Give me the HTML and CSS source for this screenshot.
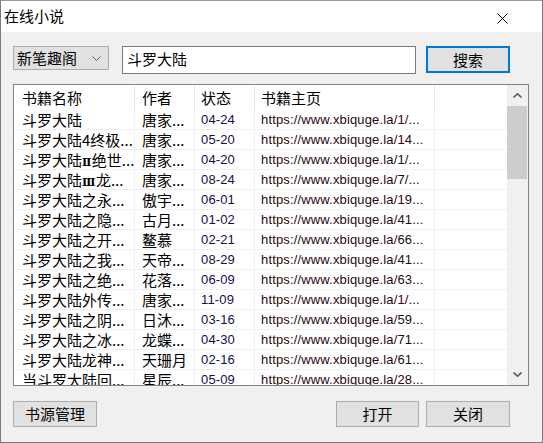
FILE: index.html
```html
<!DOCTYPE html>
<html lang="zh">
<head>
<meta charset="utf-8">
<title>在线小说</title>
<link rel="stylesheet" href="styles.css">
</head>
<body>
<div class="window">
  <div class="titlebar">
    <span class="title">在线小说</span>
    <svg class="close" width="11" height="11" viewBox="0 0 11 11"><path d="M0.5 0.5 L10.5 10.5 M10.5 0.5 L0.5 10.5" stroke="#000" stroke-width="1" fill="none"/></svg>
  </div>
  <div class="content">
    <div class="toolbar">
      <div class="combo"><span>新笔趣阁</span><svg class="chev" width="9" height="5" viewBox="0 0 9 5"><path d="M0.5 0.5 L4.5 4.5 L8.5 0.5" stroke="#606060" fill="none"/></svg></div>
      <div class="input">斗罗大陆</div>
      <div class="btn primary">搜索</div>
    </div>
    <div class="list">
      <div class="cols">
        <div class="row head">
          <div class="c c1">书籍名称</div><div class="c c2">作者</div><div class="c c3">状态</div><div class="c c4">书籍主页</div><div class="c c5"></div>
        </div>
        <div class="row"><div class="c c1">斗罗大陆</div><div class="c c2">唐家...</div><div class="c c3">04-24</div><div class="c c4">https://www.xbiquge.la/1/...</div><div class="c c5"></div></div>
        <div class="row"><div class="c c1">斗罗大陆4终极...</div><div class="c c2">唐家...</div><div class="c c3">05-20</div><div class="c c4">https://www.xbiquge.la/14...</div><div class="c c5"></div></div>
        <div class="row"><div class="c c1">斗罗大陆<span class="roman">Ⅱ</span>绝世...</div><div class="c c2">唐家...</div><div class="c c3">04-20</div><div class="c c4">https://www.xbiquge.la/1/...</div><div class="c c5"></div></div>
        <div class="row"><div class="c c1">斗罗大陆<span class="roman">Ⅲ</span>龙...</div><div class="c c2">唐家...</div><div class="c c3">08-24</div><div class="c c4">https://www.xbiquge.la/7/...</div><div class="c c5"></div></div>
        <div class="row"><div class="c c1">斗罗大陆之永...</div><div class="c c2">傲宇...</div><div class="c c3">06-01</div><div class="c c4">https://www.xbiquge.la/19...</div><div class="c c5"></div></div>
        <div class="row"><div class="c c1">斗罗大陆之隐...</div><div class="c c2">古月...</div><div class="c c3">01-02</div><div class="c c4">https://www.xbiquge.la/41...</div><div class="c c5"></div></div>
        <div class="row"><div class="c c1">斗罗大陆之开...</div><div class="c c2">鳌慕</div><div class="c c3">02-21</div><div class="c c4">https://www.xbiquge.la/66...</div><div class="c c5"></div></div>
        <div class="row"><div class="c c1">斗罗大陆之我...</div><div class="c c2">天帝...</div><div class="c c3">08-29</div><div class="c c4">https://www.xbiquge.la/41...</div><div class="c c5"></div></div>
        <div class="row"><div class="c c1">斗罗大陆之绝...</div><div class="c c2">花落...</div><div class="c c3">06-09</div><div class="c c4">https://www.xbiquge.la/63...</div><div class="c c5"></div></div>
        <div class="row"><div class="c c1">斗罗大陆外传...</div><div class="c c2">唐家...</div><div class="c c3">11-09</div><div class="c c4">https://www.xbiquge.la/1/...</div><div class="c c5"></div></div>
        <div class="row"><div class="c c1">斗罗大陆之阴...</div><div class="c c2">日沐...</div><div class="c c3">03-16</div><div class="c c4">https://www.xbiquge.la/59...</div><div class="c c5"></div></div>
        <div class="row"><div class="c c1">斗罗大陆之冰...</div><div class="c c2">龙蝶...</div><div class="c c3">04-30</div><div class="c c4">https://www.xbiquge.la/71...</div><div class="c c5"></div></div>
        <div class="row"><div class="c c1">斗罗大陆龙神...</div><div class="c c2">天珊月</div><div class="c c3">02-16</div><div class="c c4">https://www.xbiquge.la/61...</div><div class="c c5"></div></div>
        <div class="row"><div class="c c1">当斗罗大陆回...</div><div class="c c2">星辰...</div><div class="c c3">05-09</div><div class="c c4">https://www.xbiquge.la/28...</div><div class="c c5"></div></div>
      </div>
      <div class="scrollbar">
        <div class="sb-btn"><svg width="9" height="5" viewBox="0 0 9 5"><path d="M0.5 4.5 L4.5 0.8 L8.5 4.5" stroke="#606060" stroke-width="1.6" fill="none"/></svg></div>
        <div class="thumb"></div>
        <div class="sb-track"></div>
        <div class="sb-btn"><svg width="9" height="5" viewBox="0 0 9 5"><path d="M0.5 0.5 L4.5 4.2 L8.5 0.5" stroke="#606060" stroke-width="1.6" fill="none"/></svg></div>
      </div>
    </div>
    <div class="footer">
      <div class="btn">书源管理</div>
      <div class="spacer"></div>
      <div class="btn w83">打开</div>
      <div class="btn">关闭</div>
    </div>
  </div>
</div>
</body>
</html>
```

FILE: styles.css
```css
html, body {
  margin: 0;
  padding: 0;
}
body {
  font-family: "Noto Sans CJK SC", sans-serif;
  font-size: 15px;
  color: #000;
}
.window {
  width: 543px;
  height: 443px;
  box-sizing: border-box;
  border: 1px solid #7a7a7a;
  border-top-color: #9a9a9a;
  background: #f0f0f0;
  display: flex;
  flex-direction: column;
  overflow: hidden;
}
.titlebar {
  height: 31px;
  background: #fff;
  display: flex;
  align-items: center;
  padding-left: 3px;
  padding-right: 34px;
  flex-shrink: 0;
}
.title {
  flex: 1;
  line-height: 20px;
  margin-top: -2px;
}
.close {
  display: block;
  margin-top: 3px;
}
.content {
  padding: 14px 0 0 12px;
  display: flex;
  flex-direction: column;
}
.toolbar {
  display: flex;
  align-items: flex-start;
  height: 28px;
}
.combo {
  width: 96px;
  height: 24px;
  box-sizing: border-box;
  border: 1px solid #adadad;
  background: #e1e1e1;
  display: flex;
  align-items: center;
  justify-content: space-between;
  padding: 0 7px 0 3px;
  line-height: 20px;
}
.chev {
  display: block;
  margin-top: 1px;
}
.input {
  margin-left: 13px;
  width: 294px;
  height: 28px;
  box-sizing: border-box;
  border: 1px solid #7a7a7a;
  background: #fff;
  padding: 2px 0 0 4px;
  line-height: 20px;
}
.btn {
  width: 84px;
  height: 26px;
  box-sizing: border-box;
  border: 1px solid #adadad;
  background: #e1e1e1;
  display: flex;
  align-items: center;
  justify-content: center;
  line-height: 20px;
}
.btn.primary {
  margin-left: 10px;
  height: 27px;
  border: 2px solid #0078d7;
}
.btn.w83 {
  width: 83px;
}
.list {
  margin-top: 10px;
  width: 516px;
  height: 302px;
  box-sizing: border-box;
  border: 1px solid #828282;
  background: #fff;
  display: flex;
  overflow: hidden;
}
.cols {
  width: 493px;
  display: flex;
  flex-direction: column;
  overflow: hidden;
}
.row {
  display: flex;
  height: 20px;
  flex-shrink: 0;
  box-sizing: border-box;
  border-bottom: 1px solid #f0f0f0;
}
.row.head {
  height: 25px;
  border-bottom: none;
}
.c {
  box-sizing: border-box;
  border-right: 1px solid #f0f0f0;
  white-space: nowrap;
  overflow: hidden;
  line-height: 19px;
}
.roman {
  font-family: "DejaVu Serif", "Liberation Serif", serif;
  font-size: 11px;
  font-weight: bold;
  letter-spacing: -0.5px;
  margin-right: 1px;
}
.head .c {
  border-right-color: #e5e5e5;
  line-height: 24px;
  margin-top: 1px;
}
.c1 { width: 121px; padding-left: 8px; }
.c2 { width: 60px; padding-left: 7px; }
.c3 { width: 60px; padding-left: 6px; }
.c4 { width: 180px; padding-left: 6px; }
.c5 { flex: 1; border-right: none; }
.head .c5 { border-right: none; }
.row:not(.head) .c3,
.row:not(.head) .c4 {
  font-family: "Liberation Sans", "DejaVu Sans", sans-serif;
  font-size: 13px;
  letter-spacing: 0.15px;
  line-height: 20px;
}
.row:not(.head) .c3 { color: #10104a; }
.row:not(.head) .c4 { color: #2a0a0a; }
.scrollbar {
  width: 21px;
  background: #f0f0f0;
  display: flex;
  flex-direction: column;
}
.sb-btn {
  height: 21px;
  display: flex;
  align-items: center;
  justify-content: center;
  flex-shrink: 0;
}
.sb-btn svg { display: block; }
.thumb {
  height: 73px;
  margin: 0 1px 0 0;
  background: #cdcdcd;
  flex-shrink: 0;
}
.sb-track {
  flex: 1;
}
.footer {
  margin-top: 15px;
  display: flex;
  width: 497px;
  gap: 7px;
}
.spacer {
  flex: 1;
}
```
